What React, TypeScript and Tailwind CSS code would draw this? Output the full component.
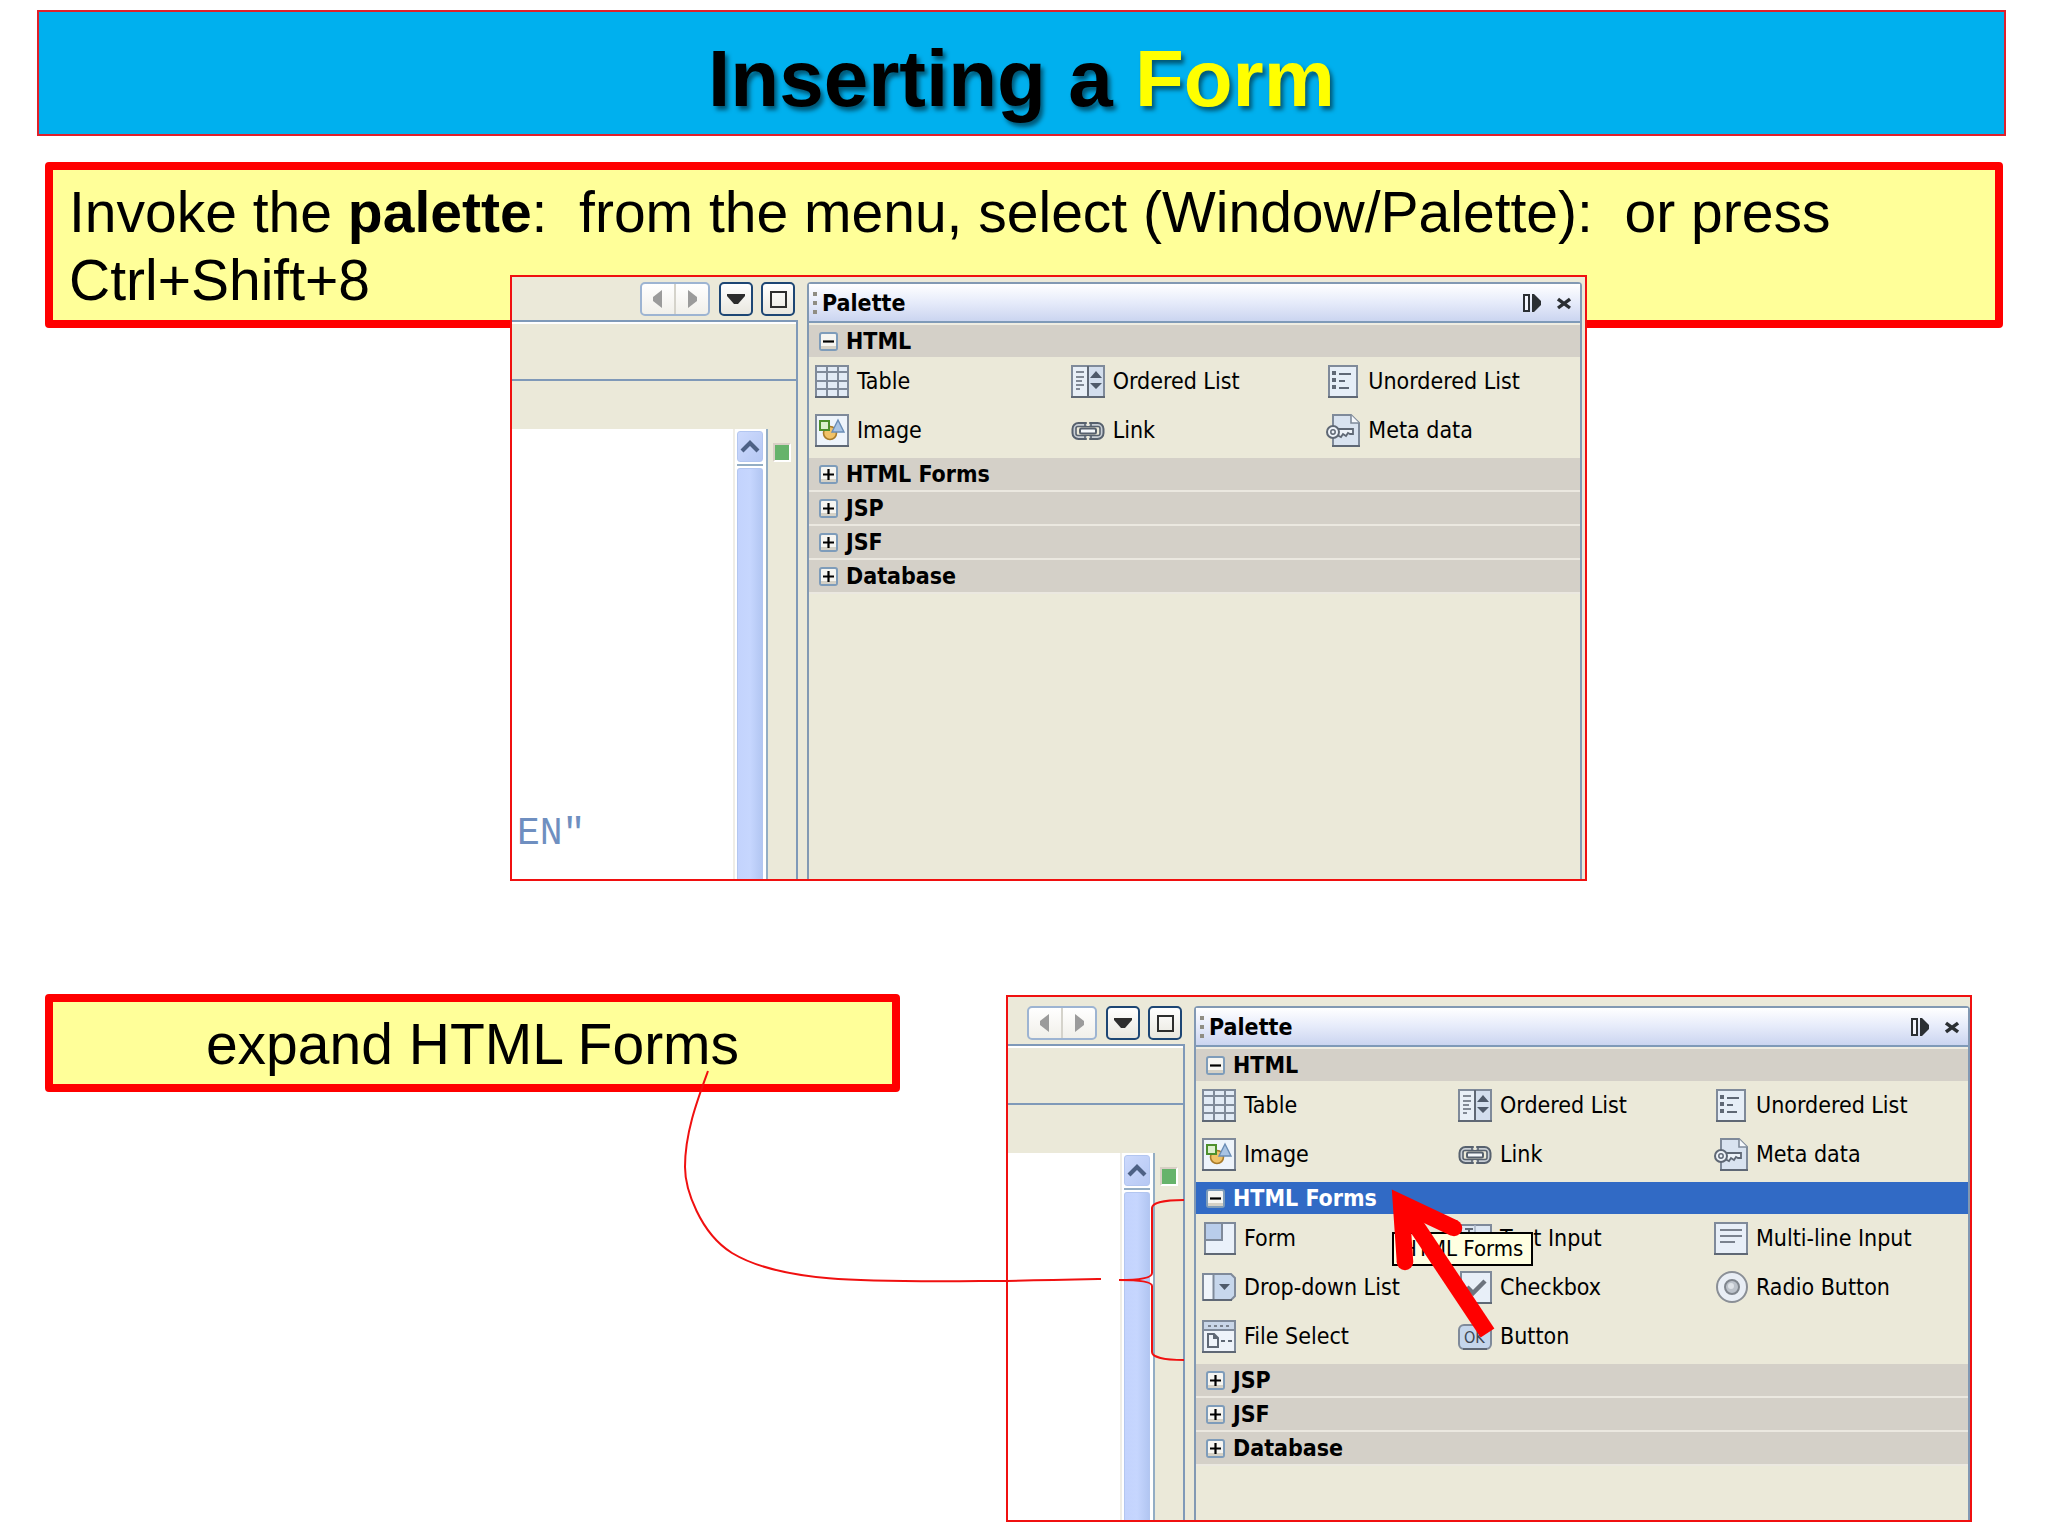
import React from 'react';

type IconName =
  | 'table' | 'ordered' | 'unordered' | 'image' | 'link' | 'meta'
  | 'form' | 'text' | 'multiline' | 'dropdown' | 'checkbox' | 'radio' | 'file' | 'button';

interface PaletteItem {
  label: string;
  icon: IconName;
}

interface PaletteGroup {
  name: string;
  open?: boolean;
  selected?: boolean;
  items?: PaletteItem[];
}

const htmlItems: PaletteItem[] = [
  { label: 'Table', icon: 'table' },
  { label: 'Ordered List', icon: 'ordered' },
  { label: 'Unordered List', icon: 'unordered' },
  { label: 'Image', icon: 'image' },
  { label: 'Link', icon: 'link' },
  { label: 'Meta data', icon: 'meta' },
];

const formItems: PaletteItem[] = [
  { label: 'Form', icon: 'form' },
  { label: 'Text Input', icon: 'text' },
  { label: 'Multi-line Input', icon: 'multiline' },
  { label: 'Drop-down List', icon: 'dropdown' },
  { label: 'Checkbox', icon: 'checkbox' },
  { label: 'Radio Button', icon: 'radio' },
  { label: 'File Select', icon: 'file' },
  { label: 'Button', icon: 'button' },
];

const collapsedGroups: PaletteGroup[] = [
  { name: 'HTML', open: true, items: htmlItems },
  { name: 'HTML Forms' },
  { name: 'JSP' },
  { name: 'JSF' },
  { name: 'Database' },
];

const expandedGroups: PaletteGroup[] = [
  { name: 'HTML', open: true, items: htmlItems },
  { name: 'HTML Forms', open: true, selected: true, items: formItems },
  { name: 'JSP' },
  { name: 'JSF' },
  { name: 'Database' },
];

const EDGE = '#7f8a9a';
const DARK = '#5f6875';

const drawings: Record<IconName, React.ReactNode> = {
  table: (
    <>
      <rect x="1" y="2" width="32" height="31" fill="#e2ebf6" stroke={EDGE} strokeWidth="2" />
      <path d="M12 2v31M23 2v31M1 8h32M1 17h32M1 25h32" stroke={EDGE} strokeWidth="2" />
      <path d="M0 33h34" stroke={DARK} strokeWidth="2" />
    </>
  ),
  ordered: (
    <>
      <rect x="1" y="2" width="32" height="31" fill="#e8eff7" stroke={EDGE} strokeWidth="2" />
      <rect x="17" y="3" width="15" height="29" fill="#d3deed" />
      <path d="M17 2v31" stroke={DARK} strokeWidth="2" />
      <path d="M5 8h8M5 13h8M5 17h6M5 21h8M5 25h4" stroke={DARK} strokeWidth="1.6" />
      <path d="M19 14l6-7 6 7zM19 19h12l-6 6z" fill="#4f5a6a" />
      <path d="M0 33h34" stroke={DARK} strokeWidth="2" />
    </>
  ),
  unordered: (
    <>
      <rect x="3" y="2" width="28" height="31" fill="#e6eef7" stroke={EDGE} strokeWidth="2" />
      <path d="M6 9h4M6 16h4M6 23h4" stroke={DARK} strokeWidth="4" />
      <path d="M13 10h12M13 17h6M13 24h10" stroke={DARK} strokeWidth="2" />
      <path d="M2 33h30" stroke={DARK} strokeWidth="2" />
    </>
  ),
  image: (
    <>
      <rect x="1" y="2" width="32" height="31" fill="#eef4fb" stroke={EDGE} strokeWidth="2" />
      <circle cx="15" cy="20" r="6.5" fill="#f0c268" stroke="#a87b2a" strokeWidth="1.6" />
      <rect x="5" y="8" width="9" height="9" fill="#dcefcf" stroke="#4d8f2d" strokeWidth="2" />
      <path d="M23 7l6 12H17z" fill="#a9c4e4" stroke="#6b8db5" strokeWidth="1.4" />
      <path d="M0 33h34" stroke={DARK} strokeWidth="2" />
    </>
  ),
  link: (
    <>
      <rect x="1.5" y="10" width="31" height="16" rx="6" fill="#c9cfd6" stroke="#57616e" strokeWidth="2" />
      <rect x="5" y="13.5" width="24" height="9" rx="2" fill="#ebe9d9" stroke="#57616e" strokeWidth="1.6" />
      <path d="M17 9v4M17 23v4" stroke="#ebe9d9" strokeWidth="2.4" />
      <path d="M14 10v4M20 10v4M14 22v4M20 22v4" stroke="#57616e" strokeWidth="1.6" />
      <rect x="9" y="15.5" width="16" height="5" rx="1.5" fill="#f4f7fa" stroke="#57616e" strokeWidth="2" />
    </>
  ),
  meta: (
    <>
      <path d="M7 2h18l8 8v23H7z" fill="#d9e3f0" stroke={EDGE} strokeWidth="2" />
      <path d="M25 2v8h8" fill="#f5f8fc" stroke={EDGE} strokeWidth="1.6" />
      <path d="M6 33h28" stroke={DARK} strokeWidth="2" />
      <path d="M11 16h16v5h-3l-2-1-2 3-3-2-2 3-4-2z" fill="#eef3f9" stroke={DARK} strokeWidth="1.8" />
      <circle cx="7" cy="19" r="6" fill="#eef3f9" stroke={DARK} strokeWidth="2" />
      <circle cx="7" cy="19" r="2.2" fill="none" stroke={DARK} strokeWidth="1.5" />
    </>
  ),
  form: (
    <>
      <rect x="3" y="2" width="30" height="31" fill="#eaf1fa" stroke={EDGE} strokeWidth="2" />
      <rect x="4" y="3" width="16" height="16" fill="#b9cdea" />
      <path d="M20 3v16H4" fill="none" stroke={EDGE} strokeWidth="2" />
      <path d="M2 33h32" stroke={DARK} strokeWidth="2" />
    </>
  ),
  text: (
    <>
      <rect x="3" y="4" width="30" height="24" fill="#dde7f3" stroke={EDGE} strokeWidth="2" />
      <path d="M7 8h8M11 8v12M7 20h8" stroke={DARK} strokeWidth="2" />
      <path d="M17 4v24" stroke="#a9b5c6" strokeWidth="1.5" />
    </>
  ),
  multiline: (
    <>
      <rect x="1" y="2" width="32" height="31" fill="#e8eff8" stroke={EDGE} strokeWidth="2" />
      <path d="M6 9h22M6 15h22M6 21h15" stroke="#7a828e" strokeWidth="2" />
      <path d="M0 33h34" stroke={DARK} strokeWidth="2" />
    </>
  ),
  dropdown: (
    <>
      <path d="M1 4h28l4 4v18l-4 4H1z" fill="#c7d7ec" stroke={EDGE} strokeWidth="2" />
      <rect x="2" y="5" width="9" height="24" fill="#f0f5fb" />
      <path d="M11.5 4v26" stroke={EDGE} strokeWidth="2" />
      <path d="M17 14h11l-5.5 6z" fill="#4f5a6a" />
      <path d="M1 30h29" stroke={DARK} strokeWidth="2" />
    </>
  ),
  checkbox: (
    <>
      <rect x="3" y="2" width="30" height="31" fill="#e8eff8" stroke={EDGE} strokeWidth="2" />
      <path d="M9 17l6 6 12-12" fill="none" stroke="#6d747e" strokeWidth="4.5" />
      <path d="M2 33h32" stroke={DARK} strokeWidth="2" />
    </>
  ),
  radio: (
    <>
      <circle cx="18" cy="17" r="15" fill="#e9eef5" stroke="#8a8f96" strokeWidth="2" />
      <circle cx="18" cy="17" r="7" fill="#bcc2ca" stroke="#7f858d" strokeWidth="2" />
      <circle cx="17" cy="16" r="3" fill="#dfe3e8" />
    </>
  ),
  file: (
    <>
      <rect x="1" y="2" width="32" height="31" fill="#eef3fa" stroke={EDGE} strokeWidth="2" />
      <rect x="2" y="3" width="30" height="7" fill="#c9d6e8" />
      <path d="M1 11h32" stroke={EDGE} strokeWidth="2" />
      <path d="M6 7h22" stroke="#7a828e" strokeWidth="2" strokeDasharray="3 3" />
      <path d="M6 15h6l4 4v9H6zM12 15v4h4" fill="none" stroke={DARK} strokeWidth="2" />
      <path d="M19 22h4M26 22h4" stroke={DARK} strokeWidth="2" />
      <path d="M0 33h34" stroke={DARK} strokeWidth="2" />
    </>
  ),
  button: (
    <>
      <rect x="1" y="6" width="32" height="24" rx="5" fill="#c5d6ec" stroke={EDGE} strokeWidth="2" />
      <path d="M5 30h24" stroke={DARK} strokeWidth="2" />
      <text x="6" y="24" fontSize="16" fontFamily="DejaVu Sans Condensed, DejaVu Sans, sans-serif" fill="#3f4854">OK</text>
    </>
  ),
};

const ItemIcon: React.FC<{ name: IconName }> = ({ name }) => (
  <svg viewBox="0 0 34 34" className="h-[34px] w-[34px] flex-shrink-0" aria-hidden="true">{drawings[name]}</svg>
);

const ToggleBox: React.FC<{ open?: boolean }> = ({ open }) => (
  <svg viewBox="0 0 19 19" className="h-[19px] w-[19px] flex-shrink-0" aria-hidden="true">
    <rect x="1" y="1" width="17" height="17" rx="2" fill="#f6f5f1" stroke="#7e9cba" strokeWidth="2" />
    <path d="M2 14h15v3H2z" fill="#d5d1c6" />
    <path d={open ? 'M4 9.5h11' : 'M4 9.5h11M9.5 4v11'} stroke="#000" strokeWidth="2.2" />
  </svg>
);

const PaletteSection: React.FC<{ group: PaletteGroup }> = ({ group }) => (
  <section>
    <button
      aria-expanded={!!group.open}
      className={`flex h-8 w-full items-center gap-2 pl-[10px] text-left text-[23px] leading-8 font-bold ${
        group.selected ? 'bg-[#316ac5] text-white' : 'bg-[#d4d0c8] text-black'
      }`}
    >
      <ToggleBox open={group.open} />
      <span>{group.name}</span>
    </button>
    {group.items ? (
      <div className="grid grid-cols-3 gap-y-[9px] pt-1 pr-1 pb-2">
        {group.items.map(item => (
          <button key={item.label} className="flex h-10 items-center gap-2 pl-[6px] text-left text-[23px] leading-8 whitespace-nowrap">
            <ItemIcon name={item.icon} />
            <span>{item.label}</span>
          </button>
        ))}
      </div>
    ) : (
      <div className="h-[2px] bg-[#ebe8e0]" />
    )}
  </section>
);

const PalettePanel: React.FC<{ groups: PaletteGroup[] }> = ({ groups }) => (
  <div className="flex min-w-0 flex-1 flex-col rounded-t-[4px] border-x-2 border-t-2 border-[#8299b3] bg-[#ebe9d9]">
    <header className="flex h-[39px] items-center border-b-2 border-[#7f9ab8] bg-linear-to-b from-white via-[#e6ebfa] to-[#cbd5f0] pl-1">
      <span className="mr-[5px] flex flex-col gap-[5px]">
        <span className="h-1 w-1 bg-[#8f8d83]" />
        <span className="h-1 w-1 bg-[#8f8d83]" />
        <span className="h-1 w-1 bg-[#8f8d83]" />
      </span>
      <h2 className="flex-1 text-[23px] leading-8 font-bold">Palette</h2>
      <button aria-label="Minimize" className="mr-4">
        <svg viewBox="0 0 18 18" className="h-[18px] w-[18px]">
          <rect x="1" y="1" width="5" height="16" fill="#f4f6fd" stroke="#2b2f33" strokeWidth="2" />
          <path d="M9 0h2l7 7v4l-7 7H9z" fill="#2b2f33" />
        </svg>
      </button>
      <button aria-label="Close" className="mr-[9px]">
        <svg viewBox="0 0 14 14" className="h-[14px] w-[14px]">
          <path d="M1 3l12 9M13 3L1 12" stroke="#2b2f33" strokeWidth="3.4" />
        </svg>
      </button>
    </header>
    <div className="border-t-2 border-[#efede2]">
      {groups.map(g => <PaletteSection key={g.name} group={g} />)}
    </div>
  </div>
);

const EditorPane: React.FC<{ code?: string }> = ({ code }) => (
  <div className="flex h-full flex-col">
    <div className="flex justify-end pr-3 pb-1">
      <div className="mr-[9px] flex h-[34px] w-[70px] rounded-[5px] border-2 border-[#9db4d2] bg-linear-to-b from-white to-[#f1f0ea]">
        <button aria-label="Previous" className="flex flex-1 items-center justify-center border-r-2 border-[#d5d3cb]">
          <svg viewBox="0 0 10 18" className="h-[18px] w-[10px]"><path d="M9 0v18L0 11V7z" fill="#9b9b9b" /></svg>
        </button>
        <button aria-label="Next" className="flex flex-1 items-center justify-center">
          <svg viewBox="0 0 10 18" className="h-[18px] w-[10px]"><path d="M1 0v18l9-7V7z" fill="#9b9b9b" /></svg>
        </button>
      </div>
      <button aria-label="Show list" className="mr-2 flex h-[34px] w-[34px] items-center justify-center rounded-[5px] border-2 border-[#1d4674] bg-linear-to-b from-white to-[#e9e7df]">
        <svg viewBox="0 0 18 10" className="h-[10px] w-[18px]"><path d="M0 0h18v2l-7 8H7L0 2z" fill="#2d2d2d" /></svg>
      </button>
      <button aria-label="Maximize" className="flex h-[34px] w-[34px] items-center justify-center rounded-[5px] border-2 border-[#1d4674] bg-linear-to-b from-white to-[#e9e7df]">
        <span className="h-[17px] w-[17px] border-2 border-[#2d2d2d]" />
      </button>
    </div>
    <div className="mr-[9px] flex flex-1 flex-col border-t-2 border-r-2 border-[#7f99b8]">
      <div className="h-[59px] border-t-2 border-b-2 border-t-white border-b-[#7f99b8]" />
      <div className="h-[48px]" />
      <div className="flex flex-1">
        <div className="flex flex-1 flex-col justify-end bg-white pb-[23px] pl-[5px]">
          {code && <code className="font-['Liberation_Mono',monospace] text-[38px] leading-[44px] text-[#6f8fc0]">{code}</code>}
        </div>
        <div className="flex w-[35px] flex-col border-r-2 border-l-2 border-r-[#93adc4] border-l-[#efede6] bg-white pt-[2px] pr-[3px] pl-[2px]">
          <button aria-label="Scroll up" className="flex h-[31px] items-center justify-center rounded-[3px] border border-[#b3c6f0] bg-linear-to-br from-[#cddafd] to-[#b6c8f3]">
            <svg viewBox="0 0 20 13" className="h-[13px] w-5"><path d="M2 11l8-8 8 8" fill="none" stroke="#4d6185" strokeWidth="4.2" /></svg>
          </button>
          <div className="mt-[2px] h-[2px] bg-[#93adc4]" />
          <div className="mt-[2px] flex-1 rounded-t-[3px] border-x border-t border-[#b3c6f0] bg-linear-to-r from-[#c3d3fd] via-[#c6d6fe] to-[#b2c6f2]" />
        </div>
        <div className="w-[28px] pt-[14px] pl-[5px]">
          <div className="h-[19px] w-[18px] border-2 border-t-[#d8cfc5] border-r-white border-b-white border-l-[#d8cfc5] bg-[#66b36b]" />
        </div>
      </div>
    </div>
  </div>
);

// brace around the form controls and the arrow to the group header
const Annotations: React.FC = () => (
  <svg viewBox="0 0 500 400" className="pointer-events-none absolute top-0 left-0 h-[400px] w-[500px]" fill="none" aria-hidden="true">
    <path
      d="M176 203C156 203 144 206 144 211V276C144 281 132 283 111 283C132 283 144 285 144 289V355C144 360 156 363 176 363"
      stroke="#f01010"
      strokeWidth="2"
    />
    <path d="M393 206L479.5 336" stroke="#f00" strokeWidth="16.5" />
    <path d="M397 265L393 206L446 231" stroke="#f00" strokeWidth="16.5" strokeMiterlimit="10" />
    <circle cx="397" cy="265" r="8.25" fill="#f00" />
    <circle cx="446" cy="231" r="8.25" fill="#f00" />
  </svg>
);

const App: React.FC = () => (
  <main className="min-h-screen overflow-hidden bg-white pt-[10px] font-['Liberation_Sans',Arial,sans-serif] text-black">
    <h1 className="mr-[42px] ml-[37px] border-2 border-[#e0202b] bg-[#00b0ee] pt-[19px] pb-[7px] text-center text-[80px] leading-[96px] font-bold [text-shadow:3px_4px_4px_rgba(0,0,0,0.5)]">
      Inserting a <span className="text-[#ffff00]">Form</span>
    </h1>

    <p className="mt-[26px] mr-[45px] ml-[45px] rounded-[4px] border-8 border-[#ff0000] bg-[#ffff99] pt-2 pr-4 pb-[6px] pl-4 text-[57px] leading-[68px]">
      Invoke the <b>palette</b>:&nbsp; from the menu, select (Window/Palette):&nbsp; or press Ctrl+Shift+8
    </p>

    <div className="relative -mt-[53px] grid grid-cols-[510fr_1077fr_461fr]">
      <div className="col-start-2 flex min-h-[606px] border-2 border-[#f01010] bg-[#ebe9d9] pt-[5px] pr-[3px] font-['DejaVu_Sans_Condensed','DejaVu_Sans',sans-serif]">
        <div className="w-[295px] flex-shrink-0"><EditorPane code={'EN"'} /></div>
        <PalettePanel groups={collapsedGroups} />
      </div>
    </div>

    <div className="relative mt-[113px] grid grid-cols-[45fr_855fr_106fr_966fr_76fr] items-start">
      <p className="col-start-2 rounded-[4px] border-8 border-[#ff0000] bg-[#ffff99] pt-2 pb-[6px] text-center text-[57px] leading-[68px]">
        expand HTML Forms
      </p>
      <div className="relative col-start-4 mt-px flex min-h-[527px] border-2 border-[#f01010] bg-[#ebe9d9] pt-[9px] font-['DejaVu_Sans_Condensed','DejaVu_Sans',sans-serif]">
        <div className="w-[186px] flex-shrink-0"><EditorPane /></div>
        <PalettePanel groups={expandedGroups} />
        <div role="tooltip" className="absolute top-[235px] left-[384px] h-[34px] border-2 border-black bg-[#ffffe1] px-2 text-[22px] leading-[30px] whitespace-nowrap">
          HTML Forms
        </div>
        <Annotations />
      </div>
      <svg viewBox="0 1 2048 543" preserveAspectRatio="none" className="pointer-events-none absolute top-0 left-0 h-[543px] w-full" fill="none" aria-hidden="true">
        <path
          d="M708 78C697 108 685 140 685 174C685 196 700 240 732 260C780 289 860 289 980 288C1020 288 1060 287 1101 286"
          stroke="#f01010"
          strokeWidth="2"
        />
      </svg>
    </div>
  </main>
);

export default App;
